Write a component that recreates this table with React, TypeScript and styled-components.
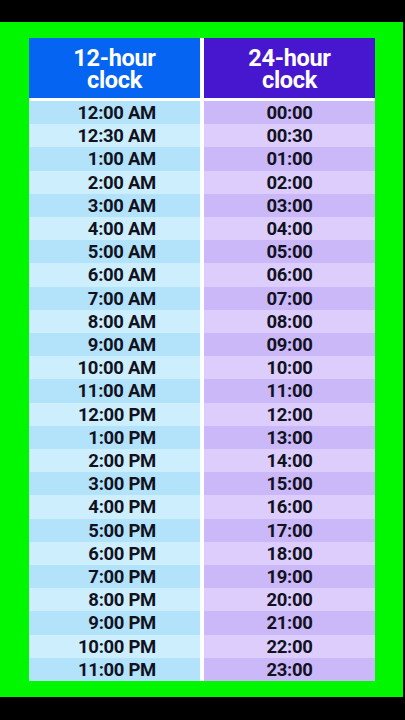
import React from 'react';
import styled, { createGlobalStyle } from 'styled-components';

const GlobalStyle = createGlobalStyle`
  html, body {
    margin: 0;
    padding: 0;
    background: #000;
  }
  body {
    width: 405px;
    height: 720px;
    overflow: hidden;
    font-family: Roboto, "Liberation Sans", sans-serif;
  }
`;

const Screen = styled.div`
  width: 405px;
  height: 720px;
  background: #000;
  padding-top: 22px;
  box-sizing: border-box;
`;

const Frame = styled.div`
  width: 403px;
  height: 675px;
  box-sizing: border-box;
  background: #00f700;
  padding: 16px 28px 16px 29px;
`;

const Table = styled.div`
  display: flex;
  flex-direction: column;
  gap: 3px;
  background: #fff;
  height: 643px;
`;

const HeaderRow = styled.div`
  display: grid;
  grid-template-columns: 1fr 1fr;
  column-gap: 4px;
  height: 60px;
`;

const HeaderCell = styled.div<{ $tone: 'blue' | 'purple' }>`
  display: flex;
  flex-direction: column;
  align-items: center;
  justify-content: center;
  background: ${p => (p.$tone === 'blue' ? '#0564f2' : '#4716cf')};
  color: #fff;
  font-size: 23.5px;
  font-weight: 700;
  letter-spacing: -0.3px;
  padding-top: 1px;
`;

const HeaderLine = styled.span`
  display: block;
  line-height: 22px;
  height: 22px;
`;

const Body = styled.div`
  flex: 1;
  display: grid;
  grid-template-columns: 1fr 1fr;
  grid-auto-rows: 1fr;
  column-gap: 4px;
`;

const Cell = styled.div<{ $tone: 'blue' | 'purple'; $dark: boolean }>`
  display: flex;
  align-items: center;
  justify-content: ${p => (p.$tone === 'blue' ? 'flex-end' : 'center')};
  padding-right: ${p => (p.$tone === 'blue' ? '44px' : '0')};
  padding-top: 1px;
  background: ${p =>
    p.$tone === 'blue'
      ? p.$dark
        ? '#b2e3fb'
        : '#cdeefd'
      : p.$dark
        ? '#cab8f8'
        : '#dccdfd'};
  color: #12121f;
  font-size: 18.5px;
  font-weight: 700;
  letter-spacing: -0.3px;
`;

const rows: [string, string][] = [
  ['12:00 AM', '00:00'],
  ['12:30 AM', '00:30'],
  ['1:00 AM', '01:00'],
  ['2:00 AM', '02:00'],
  ['3:00 AM', '03:00'],
  ['4:00 AM', '04:00'],
  ['5:00 AM', '05:00'],
  ['6:00 AM', '06:00'],
  ['7:00 AM', '07:00'],
  ['8:00 AM', '08:00'],
  ['9:00 AM', '09:00'],
  ['10:00 AM', '10:00'],
  ['11:00 AM', '11:00'],
  ['12:00 PM', '12:00'],
  ['1:00 PM', '13:00'],
  ['2:00 PM', '14:00'],
  ['3:00 PM', '15:00'],
  ['4:00 PM', '16:00'],
  ['5:00 PM', '17:00'],
  ['6:00 PM', '18:00'],
  ['7:00 PM', '19:00'],
  ['8:00 PM', '20:00'],
  ['9:00 PM', '21:00'],
  ['10:00 PM', '22:00'],
  ['11:00 PM', '23:00'],
];

export default function App() {
  return (
    <>
      <GlobalStyle />
      <Screen>
        <Frame>
          <Table>
            <HeaderRow>
              <HeaderCell $tone="blue">
                <HeaderLine>12-hour</HeaderLine>
                <HeaderLine>clock</HeaderLine>
              </HeaderCell>
              <HeaderCell $tone="purple">
                <HeaderLine>24-hour</HeaderLine>
                <HeaderLine>clock</HeaderLine>
              </HeaderCell>
            </HeaderRow>
            <Body>
              {rows.map(([twelve, twentyFour], i) => (
                <React.Fragment key={twelve}>
                  <Cell $tone="blue" $dark={i % 2 === 0}>
                    {twelve}
                  </Cell>
                  <Cell $tone="purple" $dark={i % 2 === 0}>
                    {twentyFour}
                  </Cell>
                </React.Fragment>
              ))}
            </Body>
          </Table>
        </Frame>
      </Screen>
    </>
  );
}
